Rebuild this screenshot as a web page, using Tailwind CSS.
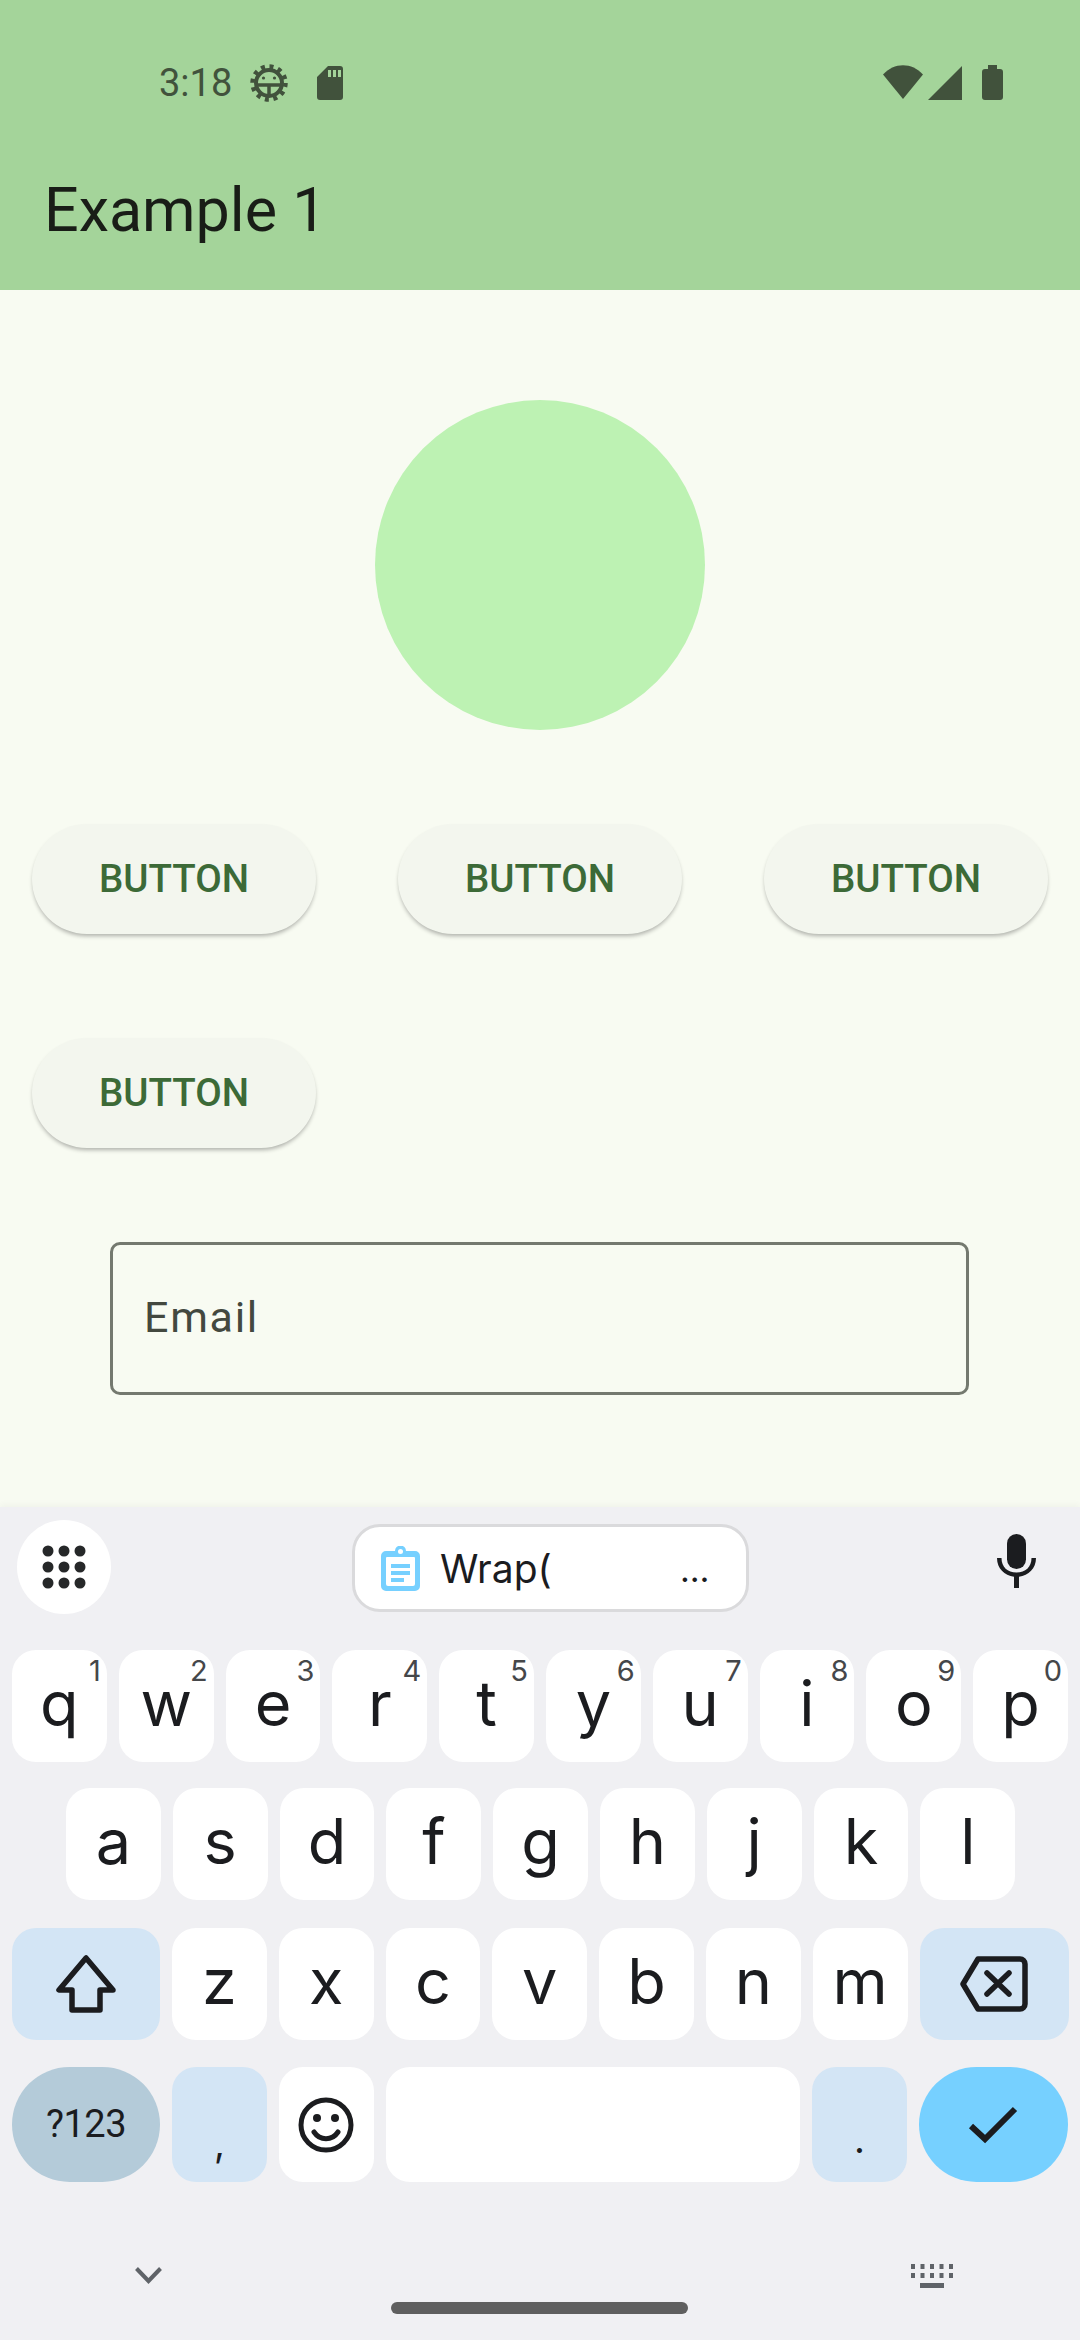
<!DOCTYPE html>
<html lang="en">
<head>
    <meta charset="UTF-8">
    <meta name="viewport" content="width=device-width, initial-scale=1.0">
    <title>Example 1</title>
    <script src="https://cdn.jsdelivr.net/npm/@tailwindcss/browser@4"></script>
</head>
<body class="m-0">
<div class="w-[1080px] h-[2340px] flex flex-col overflow-hidden bg-[#f8fbf2] font-[Roboto,sans-serif]">

    <!-- App bar with status bar -->
    <header class="h-[290px] shrink-0 bg-[#a4d49a] flex flex-col">
        <div class="h-[64px] mt-[64px] pl-[159px] pr-[77px] flex items-start text-[#41523c]">
            <span class="text-[38px] leading-[38px] w-[91px]">3:18</span>
            <svg class="w-[38px] h-[38px]" viewBox="0 0 38 38">
                <g fill="none" stroke="currentColor">
                    <circle cx="19" cy="19" r="13" stroke-width="4"/>
                    <circle cx="19" cy="19" r="16.500" stroke-width="4.500" stroke-dasharray="4 4.640"/>
                    <path d="M6 21h26M19 21v12" stroke-width="3.500"/>
                </g>
                <circle cx="13.500" cy="14" r="1.600" fill="currentColor"/>
                <circle cx="24.500" cy="14" r="1.600" fill="currentColor"/>
            </svg>
            <svg class="ml-[29px] mt-[2px] w-[26px] h-[34px]" viewBox="0 0 26 34">
                <path fill="currentColor" fill-rule="evenodd" d="M11 0h12a3 3 0 0 1 3 3v28a3 3 0 0 1-3 3H3a3 3 0 0 1-3-3V11zM11 4v7h3V4zM16 4v7h3V4zM21 4v7h3V4z"/>
            </svg>
            <svg class="ml-auto mt-[1px] w-[40px] h-[34px]" viewBox="0 0 40 34">
                <path fill="currentColor" d="M0 9.500C11-3 29-3 40 9.500L20 34z"/>
            </svg>
            <svg class="ml-[5px] mt-[2px] w-[34px] h-[34px]" viewBox="0 0 34 34">
                <path fill="currentColor" d="M34 0v34H0z"/>
            </svg>
            <svg class="ml-[20px] mt-[1px] w-[21px] h-[35px]" viewBox="0 0 21 35">
                <path fill="currentColor" d="M6 0h9v4h3a3 3 0 0 1 3 3v25a3 3 0 0 1-3 3H3a3 3 0 0 1-3-3V7a3 3 0 0 1 3-3h3z"/>
            </svg>
        </div>
        <h1 class="pl-[44px] mt-[48px] text-[61px] leading-[68px] font-normal text-[#191d17]">Example 1</h1>
    </header>

    <!-- Main content -->
    <main class="flex-1 flex flex-col">
        <div class="w-[330px] h-[330px] rounded-full bg-[#bdf2b3] mt-[110px] mx-auto shrink-0"></div>

        <div class="flex flex-wrap gap-x-[82px] gap-y-[104px] pl-[32px] mt-[94px]">
            <button class="w-[284px] h-[110px] rounded-full bg-[#f3f6ee] text-[#3c6a37] text-[38.5px] font-[460] shadow-[0_3px_4px_-1px_rgba(0,0,0,0.3)]">BUTTON</button>
            <button class="w-[284px] h-[110px] rounded-full bg-[#f3f6ee] text-[#3c6a37] text-[38.5px] font-[460] shadow-[0_3px_4px_-1px_rgba(0,0,0,0.3)]">BUTTON</button>
            <button class="w-[284px] h-[110px] rounded-full bg-[#f3f6ee] text-[#3c6a37] text-[38.5px] font-[460] shadow-[0_3px_4px_-1px_rgba(0,0,0,0.3)]">BUTTON</button>
            <button class="w-[284px] h-[110px] rounded-full bg-[#f3f6ee] text-[#3c6a37] text-[38.5px] font-[460] shadow-[0_3px_4px_-1px_rgba(0,0,0,0.3)]">BUTTON</button>
        </div>

        <div class="w-[859px] h-[153px] ml-[110px] mt-[94px] rounded-[10px] border-[3px] border-[#74796f] flex items-center pl-[31px] pb-[3px] text-[43px] tracking-[1.7px] text-[#43483f]">Email</div>
    </main>

    <!-- Keyboard -->
    <section class="h-[833px] shrink-0 bg-[#f0f0f3] flex flex-col shadow-[0_-3px_6px_rgba(0,0,0,0.03)]">
        <div class="h-[107px] pt-[13px] flex items-start relative">
            <div class="w-[94px] h-[94px] ml-[17px] rounded-full bg-white flex items-center justify-center">
                <svg class="w-[44px] h-[44px]" viewBox="0 0 44 44" fill="#262829">
                    <circle cx="6" cy="6" r="5.500"/><circle cx="22" cy="6" r="5.500"/><circle cx="38" cy="6" r="5.500"/>
                    <circle cx="6" cy="22" r="5.500"/><circle cx="22" cy="22" r="5.500"/><circle cx="38" cy="22" r="5.500"/>
                    <circle cx="6" cy="38" r="5.500"/><circle cx="22" cy="38" r="5.500"/><circle cx="38" cy="38" r="5.500"/>
                </svg>
            </div>
            <div class="w-[397px] h-[88px] ml-[241px] mt-[4px] rounded-[28px] border-[3px] border-[#dadadc] bg-white flex items-center pl-[26px] text-[39px] text-[#1b1c1f] font-[Inter,sans-serif]">
                <svg class="w-[39px] h-[45px] shrink-0" viewBox="0 0 39 45">
                    <path fill="#76d0ff" fill-rule="evenodd" d="M14 5a5.500 5.500 0 0 1 11 0h9a5 5 0 0 1 5 5v30a5 5 0 0 1-5 5H5a5 5 0 0 1-5-5V10a5 5 0 0 1 5-5zM19.500 3a2.500 2.500 0 1 0 0 5 2.500 2.500 0 0 0 0-5zM6 11a1 1 0 0 0-1 1v26a2 2 0 0 0 2 2h25a2 2 0 0 0 2-2V12a1 1 0 0 0-1-1z"/>
                    <path fill="#76d0ff" d="M10 18h19v4H10zM10 25h19v4H10zM10 32h13v4H10z"/>
                </svg>
                <span class="ml-[20px] w-[240px] pt-[2px]">Wrap(</span>
                <span class="leading-none text-[34px] pt-[3px]">…</span>
            </div>
            <svg class="w-[39px] h-[54px] ml-[248px] mt-[14px]" viewBox="0 0 39 54" fill="#1b1c1f">
                <rect x="10" y="0" width="19" height="35" rx="9.500"/>
                <path d="M0 24h4.500c0 9 6 14.500 15 14.500S34.500 33 34.500 24H39c0 10.500-7.500 17.500-17 18.800V54h-5V42.800C7.500 41.500 0 34.500 0 24z"/>
            </svg>
        </div>

        <div id="row1" class="flex gap-[12px] pl-[12px] mt-[36px]"></div>
        <div id="row2" class="flex gap-[12px] pl-[66px] mt-[26px]"></div>

        <div class="flex gap-[12px] pl-[12px] mt-[28px]">
            <div class="w-[148px] h-[112px] rounded-[24px] bg-[#d3e5f5] flex items-center justify-center">
                <svg class="w-[62px] h-[60px]" viewBox="0 0 62 60" fill="none" stroke="#1b1c1f" stroke-width="5.500" stroke-linejoin="round">
                    <path d="M31 4 4 36h13v20h28V36h13z"/>
                </svg>
            </div>
            <div id="row3" class="contents"></div>
            <div class="w-[149px] h-[112px] rounded-[24px] bg-[#d3e5f5] flex items-center justify-center">
                <svg class="w-[68px] h-[56px]" viewBox="0 0 68 56" fill="none" stroke="#1b1c1f" stroke-width="5.500" stroke-linejoin="round">
                    <path d="M18 3h42a5 5 0 0 1 5 5v40a5 5 0 0 1-5 5H18L3 28z"/>
                    <path d="M27 17l22 21M49 17 27 38" stroke-linecap="round"/>
                </svg>
            </div>
        </div>

        <div class="flex gap-[12px] pl-[12px] mt-[27px] text-[#1b1c1f]">
            <div class="w-[148px] h-[115px] rounded-full bg-[#b4cbd9] flex items-center justify-center text-[38px] tracking-[-0.5px]">?123</div>
            <div class="w-[94.8px] h-[115px] rounded-[24px] bg-[#d3e5f5] flex items-end justify-center pb-[20px] text-[38px] leading-[38px] font-[Inter,sans-serif]">,</div>
            <div class="w-[94.8px] h-[115px] rounded-[24px] bg-white flex items-center justify-center">
                <svg class="w-[56px] h-[56px]" viewBox="0 0 56 56" fill="none" stroke="#1b1c1f" stroke-width="5">
                    <circle cx="28" cy="28" r="25"/>
                    <path d="M16 35c6 9 18 9 24 0" stroke-linecap="round"/>
                    <circle cx="19" cy="21" r="4" fill="#1b1c1f" stroke="none"/>
                    <circle cx="37" cy="21" r="4" fill="#1b1c1f" stroke="none"/>
                </svg>
            </div>
            <div class="w-[414.6px] h-[115px] rounded-[24px] bg-white"></div>
            <div class="w-[94.8px] h-[115px] rounded-[24px] bg-[#d3e5f5] flex items-end justify-center pb-[24px] text-[38px] leading-[38px] font-[Inter,sans-serif]">.</div>
            <div class="w-[149px] h-[115px] rounded-full bg-[#76d0ff] flex items-center justify-center">
                <svg class="w-[50px] h-[38px]" viewBox="0 0 50 38" fill="none" stroke="#1b1c1f" stroke-width="6">
                    <path d="M3 20 17 33 47 3"/>
                </svg>
            </div>
        </div>

        <!-- Bottom bar -->
        <div class="flex-1 relative">
            <svg class="absolute left-[135px] top-[85px] w-[27px] h-[17px]" viewBox="0 0 27 17" fill="none" stroke="#5f6368" stroke-width="4">
                <path d="M1.500 1.500 13.500 14 25.500 1.500"/>
            </svg>
            <svg class="absolute left-[911px] top-[82px] w-[43px] h-[24px]" viewBox="0 0 43 24" fill="#5f6368">
                <path d="M0 0h4v5H0zM9.500 0h4v5h-4zM19 0h4v5h-4zM28.500 0h4v5h-4zM38 0h4v5h-4zM0 9h4v5H0zM9.500 9h4v5h-4zM19 9h4v5h-4zM28.500 9h4v5h-4zM38 9h4v5h-4zM9 19h24v5H9z"/>
            </svg>
            <div class="absolute left-[391px] top-[120px] w-[297px] h-[12px] rounded-full bg-[#5f5f5f]"></div>
        </div>
    </section>
</div>

<script>
    // Letter keys with their number hints
    const rows = {
        row1: [['q', '1'], ['w', '2'], ['e', '3'], ['r', '4'], ['t', '5'], ['y', '6'], ['u', '7'], ['i', '8'], ['o', '9'], ['p', '0']],
        row2: [['a'], ['s'], ['d'], ['f'], ['g'], ['h'], ['j'], ['k'], ['l']],
        row3: [['z'], ['x'], ['c'], ['v'], ['b'], ['n'], ['m']]
    };

    function createKey([letter, hint]) {
        return `
            <div class="relative w-[94.8px] h-[112px] rounded-[24px] bg-white flex items-center justify-center pb-[5px] text-[63px] font-[370] leading-none text-[#1b1c1f] font-[Inter,sans-serif]">
                ${letter}
                ${hint ? `<span class="absolute right-[6px] top-[6px] text-[29px] font-normal leading-[29px] text-[#45474a]">${hint}</span>` : ''}
            </div>`;
    }

    Object.keys(rows).forEach(id => {
        document.getElementById(id).innerHTML = rows[id].map(createKey).join('');
    });
</script>
</body>
</html>
